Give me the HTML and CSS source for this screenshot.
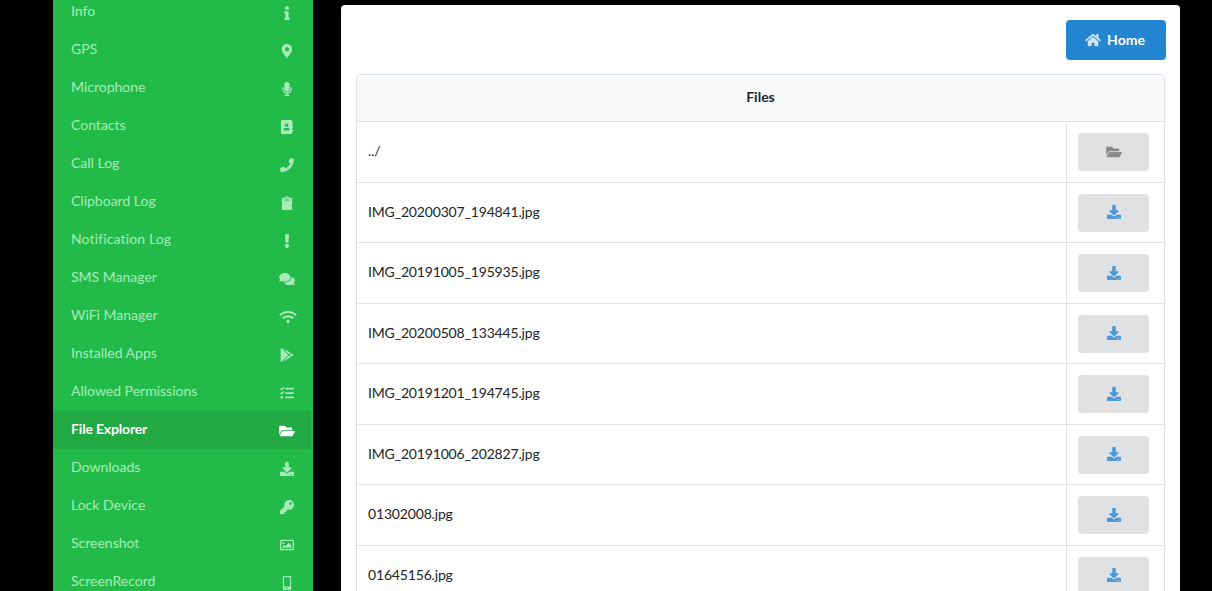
FILE: index.html
```html
<!DOCTYPE html>
<html lang="en">
<head>
<meta charset="utf-8">
<title>File Explorer</title>
<link rel="stylesheet" href="styles.css">
</head>
<body>
<svg class="defs" aria-hidden="true">
  <symbol id="i-info" viewBox="0 0 192 512"><path d="M20 424.229h20V279.771H20c-11.046 0-20-8.954-20-20V212c0-11.046 8.954-20 20-20h112c11.046 0 20 8.954 20 20v212.229h20c11.046 0 20 8.954 20 20V492c0 11.046-8.954 20-20 20H20c-11.046 0-20-8.954-20-20v-47.771c0-11.046 8.954-20 20-20zM96 0C56.235 0 24 32.235 24 72s32.235 72 72 72 72-32.235 72-72S135.764 0 96 0z"/></symbol>
  <symbol id="i-marker" viewBox="0 0 384 512"><path d="M172.268 501.67C26.97 291.031 0 256.311 0 192 0 85.961 85.961 0 192 0s192 85.961 192 192c0 64.311-26.97 99.031-172.268 309.67-9.535 13.774-29.93 13.773-39.464 0zM192 272c44.183 0 80-35.817 80-80s-35.817-80-80-80-80 35.817-80 80 35.817 80 80 80z"/></symbol>
  <symbol id="i-mic" viewBox="0 0 352 512"><path d="M176 352c53.02 0 96-42.98 96-96V96c0-53.02-42.98-96-96-96S80 42.98 80 96v160c0 53.02 42.98 96 96 96zm160-160h-16c-8.84 0-16 7.16-16 16v48c0 74.8-64.49 134.82-140.79 127.38C96.71 376.89 48 317.11 48 250.3V208c0-8.84-7.16-16-16-16H16c-8.84 0-16 7.16-16 16v40.16c0 89.64 63.97 169.55 152 181.69V464H96c-8.84 0-16 7.16-16 16v16c0 8.84 7.16 16 16 16h160c8.84 0 16-7.16 16-16v-16c0-8.84-7.16-16-16-16h-56v-33.77C285.71 418.47 352 344.9 352 256v-48c0-8.84-7.16-16-16-16z"/></symbol>
  <symbol id="i-book" viewBox="0 0 448 512"><path d="M436 160c6.6 0 12-5.4 12-12v-40c0-6.6-5.4-12-12-12h-20V48c0-26.5-21.5-48-48-48H48C21.5 0 0 21.5 0 48v416c0 26.5 21.5 48 48 48h320c26.5 0 48-21.5 48-48v-48h20c6.6 0 12-5.4 12-12v-40c0-6.6-5.4-12-12-12h-20v-64h20c6.6 0 12-5.4 12-12v-40c0-6.6-5.4-12-12-12h-20v-64h20zm-228-32c35.3 0 64 28.7 64 64s-28.7 64-64 64-64-28.7-64-64 28.7-64 64-64zm112 236.8c0 10.6-10 19.2-22.4 19.2H118.4C106 384 96 375.4 96 364.8v-19.2c0-31.8 30.1-57.6 67.2-57.6h5c12.3 5.1 25.7 8 39.8 8s27.6-2.9 39.8-8h5c37.1 0 67.2 25.8 67.2 57.6v19.2z"/></symbol>
  <symbol id="i-phone" viewBox="0 0 512 512"><path d="M493.4 24.6l-104-24c-11.3-2.6-22.9 3.3-27.5 13.9l-48 112c-4.2 9.8-1.4 21.3 6.9 28l60.6 49.6c-36 76.7-98.9 140.5-177.2 177.2l-49.6-60.6c-6.8-8.3-18.2-11.1-28-6.9l-112 48C3.9 366.5-2 378.1.6 389.4l24 104C27.1 504.2 36.7 512 48 512c256.1 0 464-207.5 464-464 0-11.2-7.7-20.9-18.6-23.4z"/></symbol>
  <symbol id="i-clip" viewBox="0 0 384 512"><path d="M384 112v352c0 26.51-21.49 48-48 48H48c-26.51 0-48-21.49-48-48V112c0-26.51 21.49-48 48-48h80c0-35.29 28.71-64 64-64s64 28.71 64 64h80c26.51 0 48 21.49 48 48zM192 40c-13.255 0-24 10.745-24 24s10.745 24 24 24 24-10.745 24-24-10.745-24-24-24m96 114v-20a6 6 0 0 0-6-6H102a6 6 0 0 0-6 6v20a6 6 0 0 0 6 6h180a6 6 0 0 0 6-6z"/></symbol>
  <symbol id="i-excl" viewBox="0 0 192 512"><path d="M176 432c0 44.112-35.888 80-80 80s-80-35.888-80-80 35.888-80 80-80 80 35.888 80 80zM25.26 25.199l13.6 272C39.499 309.972 50.041 320 62.83 320h66.34c12.789 0 23.331-10.028 23.97-22.801l13.6-272C167.425 11.49 156.496 0 142.77 0H49.23C35.504 0 24.575 11.49 25.26 25.199z"/></symbol>
  <symbol id="i-comments" viewBox="0 0 576 512"><path d="M416 192c0-88.4-93.1-160-208-160S0 103.6 0 192c0 34.3 14.1 65.9 38 92-13.4 30.2-35.5 54.2-35.8 54.5-2.2 2.3-2.8 5.7-1.5 8.7S4.8 352 8 352c36.6 0 66.9-12.3 88.7-25 32.2 15.7 70.3 25 111.3 25 114.9 0 208-71.6 208-160zm122 220c23.9-26 38-57.7 38-92 0-66.9-53.5-124.2-129.3-148.1.9 6.6 1.3 13.3 1.3 20.1 0 105.9-107.7 192-240 192-10.8 0-21.3-.8-31.7-1.9C207.8 439.6 281.8 480 368 480c41 0 79.1-9.2 111.3-25 21.8 12.7 52.1 25 88.7 25 3.2 0 6.1-1.9 7.3-4.8 1.3-2.9.7-6.3-1.5-8.7-.3-.3-22.4-24.2-35.8-54.5z"/></symbol>
  <symbol id="i-wifi" viewBox="0 0 640 512"><path d="M634.91 154.88C457.74-8.99 182.19-8.93 5.09 154.88c-6.66 6.16-6.79 16.59-.35 22.98l34.24 33.97c6.14 6.1 16.02 6.23 22.4.38 145.92-133.68 371.3-133.71 517.25 0 6.38 5.85 16.26 5.71 22.4-.38l34.24-33.97c6.43-6.39 6.3-16.82-.36-22.98zM320 352c-35.35 0-64 28.65-64 64s28.65 64 64 64 64-28.65 64-64-28.65-64-64-64zm202.67-83.59c-115.26-101.93-290.21-101.82-405.34 0-6.9 6.1-7.12 16.69-.57 23.15l34.44 33.99c6 5.92 15.66 6.32 22.05.8 83.95-72.57 209.74-72.41 293.49 0 6.39 5.52 16.05 5.13 22.05-.8l34.44-33.99c6.56-6.46 6.33-17.06-.56-23.15z"/></symbol>
  <symbol id="i-play" viewBox="0 0 512 512"><path d="M325.3 234.3L104.6 13l280.8 161.2-60.1 60.1zM47 0C34 6.8 25.3 19.2 25.3 35.3v441.3c0 16.1 8.7 28.5 21.7 35.3l256.6-256L47 0zm425.2 225.6l-58.9-34.1-65.7 64.5 65.7 64.5 60.1-34.1c18-14.3 18-46.5-1.2-60.8zM104.6 499l280.8-161.2-60.1-60.1L104.6 499z"/></symbol>
  <symbol id="i-tasks" viewBox="0 0 512 512"><path d="M139.61 35.5a12 12 0 0 0-17 0L58.93 98.81l-22.7-22.12a12 12 0 0 0-17 0L3.53 92.41a12 12 0 0 0 0 17l47.59 47.4a12.78 12.78 0 0 0 17.61 0l15.59-15.62L156.52 69a12.09 12.09 0 0 0 .09-17zm0 159.19a12 12 0 0 0-17 0l-63.68 63.72-22.7-22.1a12 12 0 0 0-17 0L3.53 252a12 12 0 0 0 0 17L51 316.5a12.77 12.77 0 0 0 17.6 0l15.7-15.69 72.2-72.22a12 12 0 0 0 .09-16.9zM64 368c-26.49 0-48.59 21.5-48.59 48S37.53 464 64 464a48 48 0 0 0 0-96zm432 16H208a16 16 0 0 0-16 16v32a16 16 0 0 0 16 16h288a16 16 0 0 0 16-16v-32a16 16 0 0 0-16-16zm0-320H208a16 16 0 0 0-16 16v32a16 16 0 0 0 16 16h288a16 16 0 0 0 16-16V80a16 16 0 0 0-16-16zm0 160H208a16 16 0 0 0-16 16v32a16 16 0 0 0 16 16h288a16 16 0 0 0 16-16v-32a16 16 0 0 0-16-16z"/></symbol>
  <symbol id="i-folder" viewBox="0 0 576 512"><path d="M572.694 292.093L500.27 416.248A63.997 63.997 0 0 1 444.989 448H45.025c-18.523 0-30.064-20.093-20.731-36.093l72.424-124.155A64 64 0 0 1 152 256h399.964c18.523 0 30.064 20.093 20.73 36.093zM152 224h328v-48c0-26.51-21.49-48-48-48H272l-64-64H48C21.49 64 0 85.49 0 112v278.046l69.077-118.418C86.214 242.25 117.989 224 152 224z"/></symbol>
  <symbol id="i-download" viewBox="0 0 512 512"><path d="M216 0h80c13.3 0 24 10.7 24 24v168h87.7c17.8 0 26.7 21.5 14.1 34.1L269.7 378.3c-7.5 7.5-19.8 7.5-27.3 0L90.1 226.1c-12.6-12.6-3.7-34.1 14.1-34.1H192V24c0-13.3 10.7-24 24-24zm296 376v112c0 13.3-10.7 24-24 24H24c-13.3 0-24-10.7-24-24V376c0-13.3 10.7-24 24-24h146.7l49 49c20.1 20.1 52.5 20.1 72.6 0l49-49H488c13.3 0 24 10.7 24 24zm-124 88c0-11-9-20-20-20s-20 9-20 20 9 20 20 20 20-9 20-20zm64 0c0-11-9-20-20-20s-20 9-20 20 9 20 20 20 20-9 20-20z"/></symbol>
  <symbol id="i-key" viewBox="0 0 512 512"><path d="M512 176.001C512 273.203 433.202 352 336 352c-11.22 0-22.19-1.062-32.827-3.069l-24.012 27.014A23.999 23.999 0 0 1 261.223 384H224v40c0 13.255-10.745 24-24 24h-40v40c0 13.255-10.745 24-24 24H24c-13.255 0-24-10.745-24-24v-78.059c0-6.365 2.529-12.47 7.029-16.971l161.802-161.802C163.108 213.814 160 195.271 160 176 160 78.798 238.797.001 335.999 0 433.488-.001 512 78.511 512 176.001zM336 128c0 26.51 21.49 48 48 48s48-21.49 48-48-21.49-48-48-48-48 21.49-48 48z"/></symbol>
  <symbol id="i-image" viewBox="0 0 512 512"><path d="M464 64H48C21.49 64 0 85.49 0 112v288c0 26.51 21.49 48 48 48h416c26.51 0 48-21.49 48-48V112c0-26.51-21.49-48-48-48zm-6 336H54a6 6 0 0 1-6-6V118a6 6 0 0 1 6-6h404a6 6 0 0 1 6 6v276a6 6 0 0 1-6 6zM128 152c-22.091 0-40 17.909-40 40s17.909 40 40 40 40-17.909 40-40-17.909-40-40-40zM96 352h320v-80l-87.515-87.515c-4.686-4.686-12.284-4.686-16.971 0L192 304l-39.515-39.515c-4.686-4.686-12.284-4.686-16.971 0L96 304v48z"/></symbol>
  <symbol id="i-mobile" viewBox="0 0 320 512"><path d="M272 0H48C21.5 0 0 21.5 0 48v416c0 26.5 21.5 48 48 48h224c26.5 0 48-21.5 48-48V48c0-26.5-21.5-48-48-48zM160 480c-17.7 0-32-14.3-32-32s14.3-32 32-32 32 14.3 32 32-14.3 32-32 32zm112-108c0 6.6-5.4 12-12 12H60c-6.6 0-12-5.4-12-12V60c0-6.6 5.4-12 12-12h200c6.6 0 12 5.4 12 12v312z"/></symbol>
  <symbol id="i-home" viewBox="0 0 576 512"><path d="M280.37 148.26L96 300.11V464a16 16 0 0 0 16 16l112.06-.29a16 16 0 0 0 15.92-16V368a16 16 0 0 1 16-16h64a16 16 0 0 1 16 16v95.64a16 16 0 0 0 16 16.05L464 480a16 16 0 0 0 16-16V300L295.67 148.26a12.19 12.19 0 0 0-15.3 0zM571.6 251.47L488 182.56V44.05a12 12 0 0 0-12-12h-56a12 12 0 0 0-12 12v72.61L318.47 43a48 48 0 0 0-61 0L4.34 251.47a12 12 0 0 0-1.6 16.9l25.5 31A12 12 0 0 0 45.15 301l235.22-193.74a12.19 12.19 0 0 1 15.3 0L530.9 301a12 12 0 0 0 16.9-1.6l25.5-31a12 12 0 0 0-1.7-16.93z"/></symbol>
</svg>
<div class="page">
  <nav class="sidebar">
    <ul class="menu">
      <li class="item"><span>Info</span><svg class="ico w-info"><use href="#i-info"/></svg></li>
      <li class="item"><span>GPS</span><svg class="ico w-marker"><use href="#i-marker"/></svg></li>
      <li class="item"><span>Microphone</span><svg class="ico w-mic"><use href="#i-mic"/></svg></li>
      <li class="item"><span>Contacts</span><svg class="ico w-book"><use href="#i-book"/></svg></li>
      <li class="item"><span>Call Log</span><svg class="ico w-sq"><use href="#i-phone"/></svg></li>
      <li class="item"><span>Clipboard Log</span><svg class="ico w-marker"><use href="#i-clip"/></svg></li>
      <li class="item spaced"><span>Notification Log</span><svg class="ico w-info"><use href="#i-excl"/></svg></li>
      <li class="item"><span>SMS Manager</span><svg class="ico w-wide"><use href="#i-comments"/></svg></li>
      <li class="item"><span>WiFi Manager</span><svg class="ico w-wifi"><use href="#i-wifi"/></svg></li>
      <li class="item"><span>Installed Apps</span><svg class="ico w-sq"><use href="#i-play"/></svg></li>
      <li class="item"><span>Allowed Permissions</span><svg class="ico w-sq"><use href="#i-tasks"/></svg></li>
      <li class="item active"><span>File Explorer</span><svg class="ico w-wide"><use href="#i-folder"/></svg></li>
      <li class="item"><span>Downloads</span><svg class="ico w-sq"><use href="#i-download"/></svg></li>
      <li class="item"><span>Lock Device</span><svg class="ico w-sq"><use href="#i-key"/></svg></li>
      <li class="item"><span>Screenshot</span><svg class="ico w-sq"><use href="#i-image"/></svg></li>
      <li class="item"><span>ScreenRecord</span><svg class="ico w-mobile"><use href="#i-mobile"/></svg></li>
    </ul>
  </nav>
  <main class="card">
    <div class="toolbar">
      <button class="home-btn" type="button"><svg class="home-ico"><use href="#i-home"/></svg>Home</button>
    </div>
    <div class="files">
      <div class="files-head">Files</div>
      <div class="row"><div class="name">../</div><div class="act"><button class="act-btn folder" type="button"><svg class="act-ico w-wide"><use href="#i-folder"/></svg></button></div></div>
      <div class="row"><div class="name">IMG_20200307_194841.jpg</div><div class="act"><button class="act-btn" type="button"><svg class="act-ico w-sq"><use href="#i-download"/></svg></button></div></div>
      <div class="row"><div class="name">IMG_20191005_195935.jpg</div><div class="act"><button class="act-btn" type="button"><svg class="act-ico w-sq"><use href="#i-download"/></svg></button></div></div>
      <div class="row"><div class="name">IMG_20200508_133445.jpg</div><div class="act"><button class="act-btn" type="button"><svg class="act-ico w-sq"><use href="#i-download"/></svg></button></div></div>
      <div class="row"><div class="name">IMG_20191201_194745.jpg</div><div class="act"><button class="act-btn" type="button"><svg class="act-ico w-sq"><use href="#i-download"/></svg></button></div></div>
      <div class="row"><div class="name">IMG_20191006_202827.jpg</div><div class="act"><button class="act-btn" type="button"><svg class="act-ico w-sq"><use href="#i-download"/></svg></button></div></div>
      <div class="row"><div class="name">01302008.jpg</div><div class="act"><button class="act-btn" type="button"><svg class="act-ico w-sq"><use href="#i-download"/></svg></button></div></div>
      <div class="row"><div class="name">01645156.jpg</div><div class="act"><button class="act-btn" type="button"><svg class="act-ico w-sq"><use href="#i-download"/></svg></button></div></div>
    </div>
  </main>
</div>
</body>
</html>
```
FILE: styles.css
```css
* { box-sizing: border-box; }
html, body { margin: 0; height: 100%; }
body {
  background: #000;
  font-family: Lato, "Liberation Sans", sans-serif;
  font-size: 14px;
  color: #212529;
  overflow: hidden;
}
.defs { display: none; }
.page {
  display: flex;
  height: 591px;
  overflow: hidden;
  padding-left: 53px;
}
.sidebar {
  flex: 0 0 260px;
  background: #22bb4a;
  padding-right: 2px;
}
.menu {
  list-style: none;
  margin: -7px 0 0;
  padding: 0;
}
.item {
  display: flex;
  align-items: center;
  justify-content: space-between;
  height: 38px;
  padding: 0 0 0 18px;
  color: #a7ebb9;
  position: relative;
}
.item span { margin-bottom: 4px; }
.item.spaced { letter-spacing: 0.13px; }
.item.active {
  background: #21a944;
  color: #fff;
  font-weight: 700;
  letter-spacing: -0.17px;
}
.ico {
  display: block;
  height: 14px;
  fill: currentColor;
  position: absolute;
  right: 24px;
  top: 13px;
  transform: translateX(50%);
}
.w-info { width: 6px; }
.w-marker { width: 11px; }
.w-mic { width: 10px; }
.w-book { width: 13px; }
.w-sq { width: 14px; }
.w-wide { width: 16px; }
.w-wifi { width: 18px; right: 23px; }
.w-mobile { width: 9px; }
.card {
  flex: 0 0 839px;
  margin: 5px 0 0 28px;
  height: 700px;
  background: #fff;
  border-radius: 4px;
  padding: 15px 14px 0 15px;
}
.toolbar {
  display: flex;
  justify-content: flex-end;
  margin-bottom: 14px;
}
.home-btn {
  display: flex;
  align-items: center;
  justify-content: center;
  gap: 6px;
  width: 100px;
  height: 40px;
  border: 0;
  border-radius: 4px;
  background: #2286d2;
  color: #fff;
  padding: 0 0 2px 0;
  font: 700 14px Lato, "Liberation Sans", sans-serif;
}
.home-ico {
  width: 16px;
  height: 14px;
  fill: #cfe5f6;
  margin: 2px 0 0 -2px;
}
.files {
  width: 809px;
  border: 1px solid #dee2e6;
  border-radius: 4px 4px 0 0;
}
.files-head {
  display: flex;
  align-items: center;
  justify-content: center;
  height: 46.25px;
  padding-bottom: 3px;
  background: #f8f9fa;
  font-weight: 700;
  border-radius: 3px 3px 0 0;
}
.row {
  display: flex;
  height: 60.5px;
  border-top: 1px solid #dee2e6;
}
.name {
  flex: 1;
  display: flex;
  align-items: center;
  padding: 0 0 3px 11px;
  letter-spacing: -0.17px;
}
.act {
  flex: 0 0 98px;
  display: flex;
  align-items: center;
  justify-content: flex-start;
  border-left: 1px solid #dee2e6;
  padding-left: 11px;
}
.act-btn {
  display: flex;
  align-items: center;
  justify-content: center;
  width: 71px;
  height: 38px;
  border: 0;
  border-radius: 4px;
  background: #e0e1e2;
  color: #4a98d6;
  padding: 0 0 1px;
}
.act-btn.folder { color: #8a8a8a; }
.act-ico {
  height: 14px;
  fill: currentColor;
}
```
